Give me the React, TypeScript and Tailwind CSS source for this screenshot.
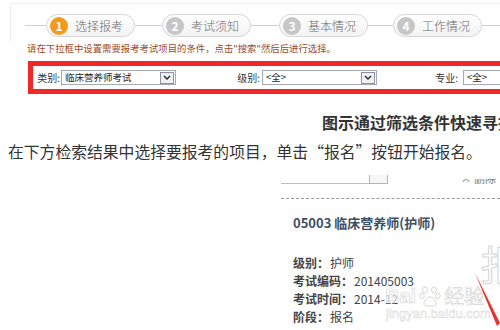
import type { ReactNode } from 'react'

const steps = [
  { n: 1, label: '选择报考', active: true },
  { n: 2, label: '考试须知', active: false },
  { n: 3, label: '基本情况', active: false },
  { n: 4, label: '工作情况', active: false },
]

function Step({ n, label, active }: { n: number; label: string; active: boolean }) {
  return (
    <div className="flex h-[23px] shrink-0 items-center gap-[7px] rounded-full border border-[#d6d6d6] bg-gradient-to-b from-white to-[#f3f3f3] pl-[3px] pr-[11px]">
      <span
        className={`flex h-[18px] w-[18px] items-center justify-center rounded-full text-[12px] font-bold leading-none text-white ${active ? 'bg-[#f39a1e]' : 'bg-[#c6c6c6]'}`}
      >
        {n}
      </span>
      <span className="text-[12px] font-light leading-none text-[#6a6a6a]">{label}</span>
    </div>
  )
}

function Select({ value, className }: { value: string; className: string }) {
  return (
    <div className={`flex h-[15px] shrink-0 items-center border border-[#a3aab3] bg-white ${className}`}>
      <span className="min-w-0 flex-1 whitespace-nowrap px-[3px] text-[9.5px] leading-[13px] text-[#222]">{value}</span>
      <span className="mr-[1px] flex h-[12px] w-[14px] shrink-0 items-center justify-center border border-[#8c939c] bg-[#eef0f2]">
        <svg width="8" height="5" viewBox="0 0 8 5">
          <path d="M1 1l3 3 3-3" fill="none" stroke="#222" strokeWidth="1.3" />
        </svg>
      </span>
    </div>
  )
}

function Label({ text, className }: { text: string; className: string }) {
  return (
    <span className={`shrink-0 whitespace-nowrap text-right text-[10px] leading-[14px] text-[#333] ${className}`}>
      {text}
    </span>
  )
}

function Field({ label, children }: { label: string; children: ReactNode }) {
  return (
    <div className="text-[12px] leading-[18px] text-[#444]">
      <span className="font-bold">{label}</span>
      <span className="ml-[1px]">{children}</span>
    </div>
  )
}

export default function App() {
  return (
    <div className="relative h-[330px] w-[500px] overflow-hidden bg-white font-['Noto_Sans_CJK_SC',sans-serif]">
      {/* step bar panel */}
      <div className="ml-[10px] mt-[3px] rounded-tl-[4px] border-l border-t border-[#ececec] pb-[5px] pl-[14px] pt-[10px]">
        <div className="flex items-center">
          <div className="h-px w-[21px] shrink-0 bg-[#cfcfcf]" />
          <Step {...steps[0]} />
          <div className="h-px w-[27px] shrink-0 bg-[#cfcfcf]" />
          <Step {...steps[1]} />
          <div className="h-px w-[28px] shrink-0 bg-[#cfcfcf]" />
          <Step {...steps[2]} />
          <div className="h-px w-[25px] shrink-0 bg-[#cfcfcf]" />
          <Step {...steps[3]} />
          <div className="h-px flex-1 bg-[#cfcfcf]" />
        </div>
      </div>

      <p className="ml-[27px] whitespace-nowrap text-[9.4px] leading-[12px] text-[#9a4a28]">
        请在下拉框中设置需要报考考试项目的条件，点击"搜索"然后后进行选择。
      </p>

      {/* filter row in red frame; label cells have fixed widths so the selects sit at 61, 262 and 463 */}
      <div className="ml-[28px] mt-[7px] flex h-[33px] w-[490px] items-center overflow-hidden border-[5px] border-[#f0282a] bg-white pl-[4px]">
        <Label text="类别:" className="w-[24px] pr-[1px] text-left" />
        <Select value="临床营养师考试" className="w-[115px]" />
        <Label text="级别:" className="w-[86px] pr-[2px]" />
        <Select value="<全>" className="w-[115px]" />
        <Label text="专业:" className="w-[86px] pr-[5px]" />
        <Select value="<全>" className="w-[60px]" />
      </div>

      <h2 className="mt-[18px] whitespace-nowrap pl-[322px] text-[16px] font-bold leading-[20px] text-[#333]">
        图示通过筛选条件快速寻找
      </h2>
      <p className="ml-[8px] mt-[10px] whitespace-nowrap text-[15.8px] leading-[20px] text-[#333]">
        在下方检索结果中选择要报考的项目，单击“报名”按钮开始报名。
      </p>

      {/* search result excerpt */}
      <div className="ml-[281px] mt-[13px]">
        <div className="flex h-[9px] items-end">
          <div className="h-[9px] w-[88px] border-b border-[#bdbdbd]" />
          <div className="h-[9px] w-[19px] border-x border-b border-[#b5b5b5] bg-[#f6f6f6]" />
          <div className="ml-auto mr-[4px] flex h-[5px] items-end overflow-hidden">
            <span className="text-[11px] leading-[11px] text-[#777]">× 删除</span>
          </div>
        </div>
        <div className="mt-[14px] border-t border-dashed border-[#9a9a9a]" />
        <div className="ml-[12px] mt-[16px] text-[13px] font-bold leading-[16px] text-[#3d4f63]">
          05003 临床营养师(护师)
        </div>
        <div className="ml-[12px] mt-[23px]">
          <Field label="级别：">护师</Field>
          <Field label="考试编码：">201405003</Field>
          <Field label="考试时间：">2014-12</Field>
          <Field label="阶段：">报名</Field>
        </div>
      </div>

      {/* watermark and annotation overlays */}
      <div className="pointer-events-none absolute left-[385px] top-[285px] flex items-center gap-[3px] text-white/70 [-webkit-text-stroke:0.7px_#d6d6d6]">
        <span className="font-['Liberation_Sans',sans-serif] text-[20px] font-bold leading-none">Bai</span>
        <svg width="22" height="22" viewBox="0 0 22 22" fill="none" stroke="#d6d6d6" strokeWidth="1">
          <ellipse cx="6" cy="5" rx="2.5" ry="3" />
          <ellipse cx="15" cy="5" rx="2.5" ry="3" />
          <ellipse cx="3" cy="11" rx="2.2" ry="2.7" />
          <ellipse cx="19" cy="11" rx="2.2" ry="2.7" />
          <path d="M5 19c0-4 3-7 6-7s6 3 6 7c0 2-3 2-6 2s-6 0-6-2z" />
        </svg>
        <span className="text-[20px] leading-none">经验</span>
      </div>
      <div className="pointer-events-none absolute left-[386px] top-[307px] font-['Liberation_Sans',sans-serif] text-[13px] leading-none text-white/70 [-webkit-text-stroke:0.5px_#d8d8d8]">
        jingyan.baidu.com
      </div>
      <div className="pointer-events-none absolute left-[481px] top-[243px] text-[40px] leading-none text-white [-webkit-text-stroke:1px_#d4d4d4]">
        报
      </div>
      <svg className="pointer-events-none absolute left-[470px] top-[268px]" width="30" height="62" viewBox="0 0 30 62">
        <path d="M5 5 L30 55 L27 58 Z" fill="#e8322e" />
      </svg>
    </div>
  )
}
